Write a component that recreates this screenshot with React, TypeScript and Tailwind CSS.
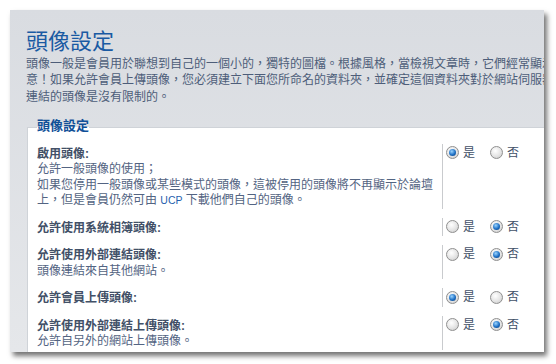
import React from 'react';

const Radio = ({ checked }: { checked?: boolean }) => (
  <span className="flex h-[13px] w-[13px] shrink-0 items-center justify-center rounded-full border border-[#8f8f8f] bg-[radial-gradient(circle_at_40%_35%,#ffffff,#e4e4e4_55%,#c4c4c4)]">
    {checked && (
      <span className="h-[7px] w-[7px] rounded-full bg-[radial-gradient(circle_at_40%_35%,#9ad4ff,#1d6fc4_55%,#0a3670)]" />
    )}
  </span>
);

const YesNo = ({ yes }: { yes: boolean }) => (
  <div className="flex h-[18px] items-center pl-[3px] pt-[0px] text-[12px] text-[#425067]">
    <Radio checked={yes} />
    <span className="ml-[4px]">是</span>
    <span className="ml-[15px]">
      <Radio checked={!yes} />
    </span>
    <span className="ml-[4px]">否</span>
  </div>
);

const Row = ({ label, yes, children }: { label: string; yes: boolean; children?: React.ReactNode }) => (
  <div className="mb-[9px] flex">
    <div className="w-[405px] shrink-0 pt-[3px] text-[12px] leading-[15.5px] whitespace-nowrap">
      <div className="font-bold text-[#425067]">{label}:</div>
      {children && <div className="text-[#536482]">{children}</div>}
    </div>
    <div className="border-l border-[#c9cbce]">
      <YesNo yes={yes} />
    </div>
  </div>
);

export default function App() {
  return (
    <div className="h-[364px] w-[556px] overflow-hidden bg-white font-['Liberation_Sans','Noto_Sans_CJK_TC',sans-serif]">
      <div className="ml-[10px] mt-[10px] h-[342px] w-[534px] overflow-hidden bg-[linear-gradient(#d9dce1,#e5e7ea)] pl-[16px] pt-[19px] shadow-[3px_4px_5px_rgba(0,0,0,0.55)]">
        <h1 className="text-[22px] leading-[26px] font-normal text-[#1a5aa3]">頭像設定</h1>
        <p className="mt-[1px] whitespace-nowrap text-[12px] leading-[16.25px] text-[#4d5d79]">
          頭像一般是會員用於聯想到自己的一個小的，獨特的圖檔。根據風格，當檢視文章時，它們經常顯示於使用者名稱的下方。在這裡您可以決定會員如何定義他們的頭像。請注
          <br />
          意！如果允許會員上傳頭像，您必須建立下面您所命名的資料夾，並確定這個資料夾對於網站伺服器是可寫入的。請注意，檔案大小的限制只適用於上傳的頭像，對於遠端
          <br />
          連結的頭像是沒有限制的。
        </p>
        <fieldset className="ml-[1px] mt-[13px] w-[560px] border border-[#cfd3d8] bg-white pl-[9px] pt-[6px]">
          <legend className="pb-[4px] text-[13px] leading-[16px] font-bold text-[#115098]">頭像設定</legend>
          <Row label="啟用頭像" yes>
            允許一般頭像的使用；
            <br />
            如果您停用一般頭像或某些模式的頭像，這被停用的頭像將不再顯示於論壇
            <br />
            上，但是會員仍然可由 <span className="text-[10.5px] text-[#1f5fae]">UCP</span> 下載他們自己的頭像。
          </Row>
          <Row label="允許使用系統相簿頭像" yes={false} />
          <Row label="允許使用外部連結頭像" yes={false}>
            頭像連結來自其他網站。
          </Row>
          <Row label="允許會員上傳頭像" yes />
          <Row label="允許使用外部連結上傳頭像" yes={false}>
            允許自另外的網站上傳頭像。
          </Row>
        </fieldset>
      </div>
    </div>
  );
}
